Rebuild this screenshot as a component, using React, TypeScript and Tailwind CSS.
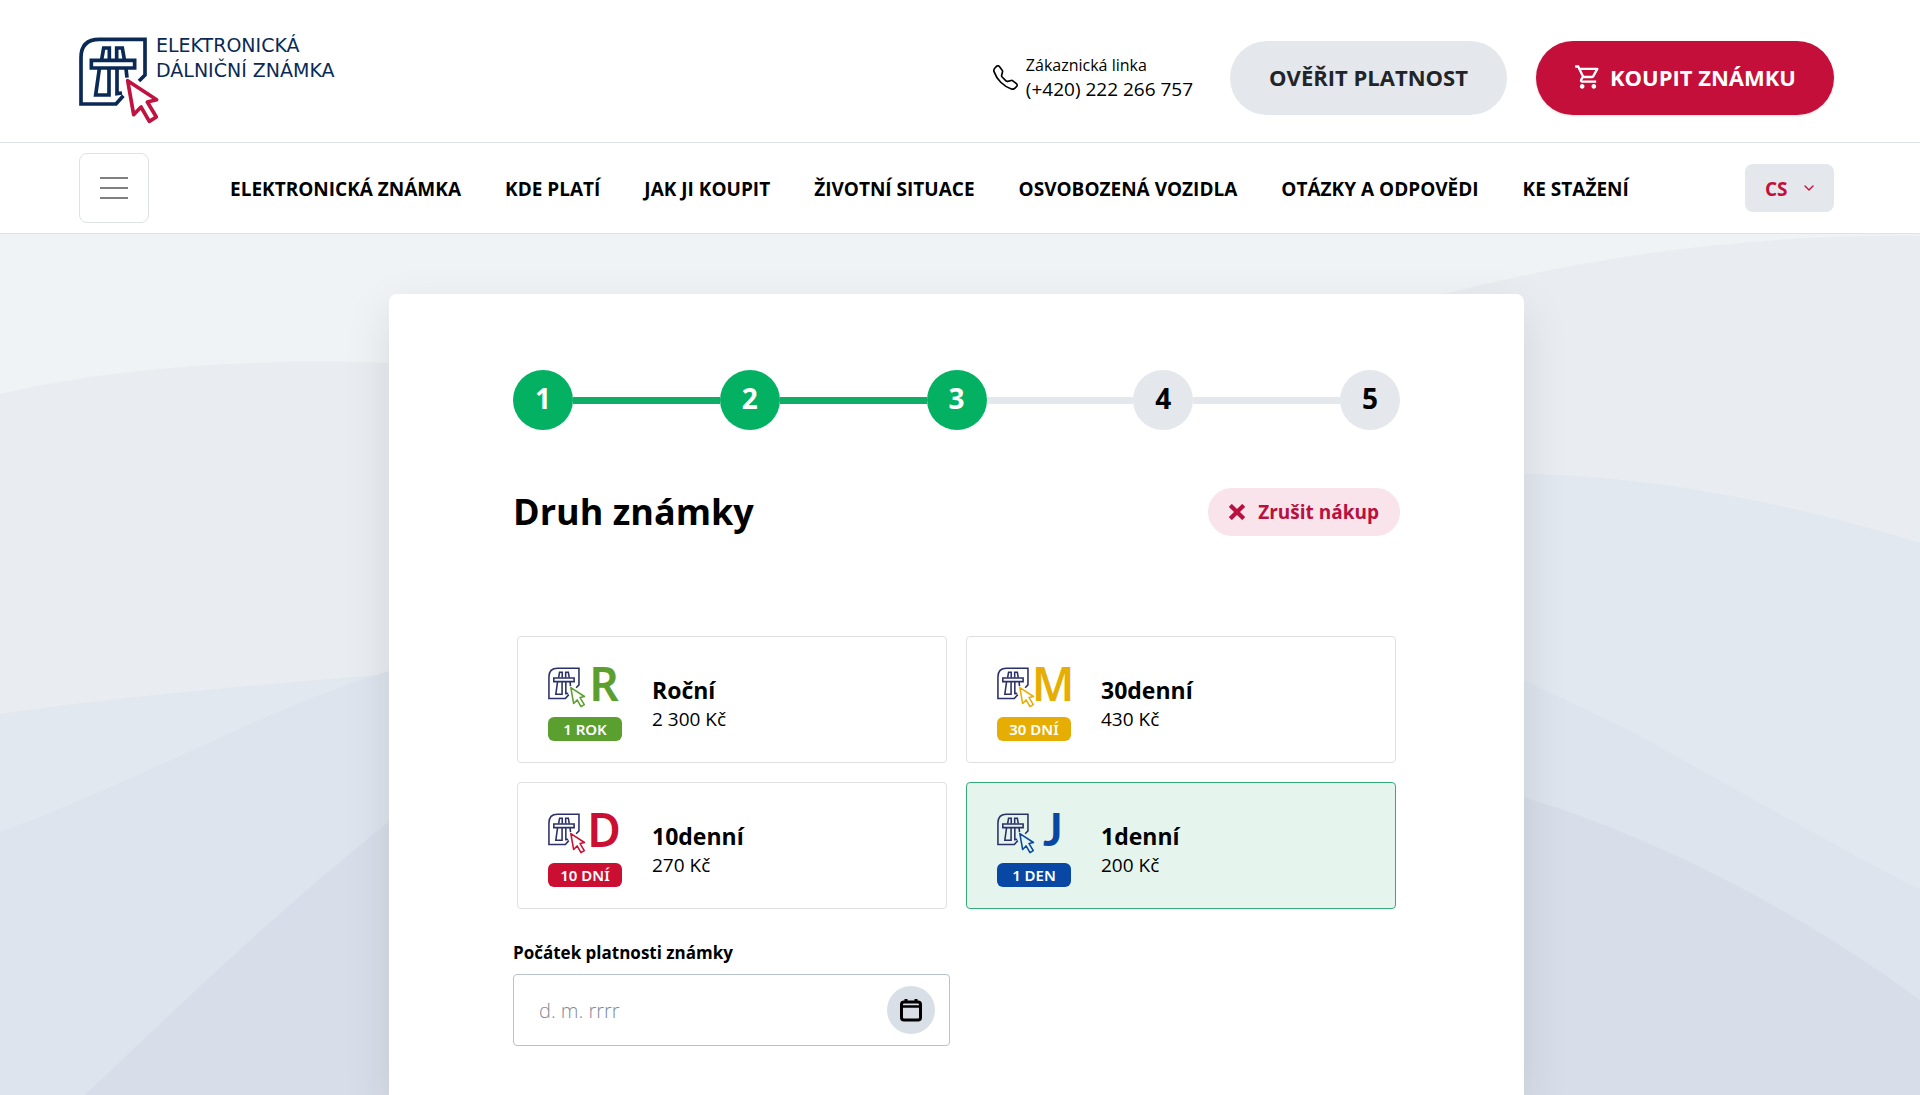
import React, { useState } from 'react';
import { BsTelephone } from 'react-icons/bs';
import { ImCross } from 'react-icons/im';
import { MdOutlineShoppingCart } from 'react-icons/md';
import { ChevronDown } from 'lucide-react';

interface Vignette {
  id: string;
  letter: string;
  letterFont: string;
  badge: string;
  name: string;
  price: string;
  color: string;
}

const NAV_ITEMS = [
  'ELEKTRONICKÁ ZNÁMKA',
  'KDE PLATÍ',
  'JAK JI KOUPIT',
  'ŽIVOTNÍ SITUACE',
  'OSVOBOZENÁ VOZIDLA',
  'OTÁZKY A ODPOVĚDI',
  'KE STAŽENÍ',
];

const NOTO = "font-['Noto_Sans',sans-serif] font-semibold";
// Lato keeps the J on the baseline
const LATO = "font-['Lato',sans-serif] font-bold";

const VIGNETTES: Vignette[] = [
  { id: 'R', letter: 'R', letterFont: NOTO, badge: '1 ROK', name: 'Roční', price: '2 300 Kč', color: '#5ba02f' },
  { id: 'M', letter: 'M', letterFont: NOTO, badge: '30 DNÍ', name: '30denní', price: '430 Kč', color: '#e6ae05' },
  { id: 'D', letter: 'D', letterFont: NOTO, badge: '10 DNÍ', name: '10denní', price: '270 Kč', color: '#cb0f32' },
  { id: 'J', letter: 'J', letterFont: LATO, badge: '1 DEN', name: '1denní', price: '200 Kč', color: '#0848a4' },
];

const STEPS = [1, 2, 3, 4, 5];
const CURRENT_STEP = 3;

interface LogoMarkProps {
  className?: string;
  color: string;
  cursorColor: string;
  strokeWidth: number;
}

/** Motorway sign with a mouse cursor over its corner */
const LogoMark: React.FC<LogoMarkProps> = ({ className, color, cursorColor, strokeWidth }) => (
  <svg viewBox="57 82 243 261" className={className} fill="none" aria-hidden="true">
    <g stroke={color} strokeWidth={strokeWidth}>
      <path d="M237 214 L255 196 V89 H118 Q63 89 63 144 V283 H168 L190 258" />
      <path d="M94 152 H224 V175 H94 Z" />
      <path d="M125 150 L131 115 H148 V150 M170 150 V115 H187 L193 150" />
      <path d="M118 177 L107 256 H147 V177 M171 177 V252 L186 250 M198 177 L201 204" />
    </g>
    <path
      d="M203 213 L290 270 L262 277 L289 322 L268 335 L243 292 L221 315 Z"
      stroke={cursorColor}
      strokeWidth={strokeWidth}
      strokeLinejoin="round"
    />
  </svg>
);

const Header: React.FC = () => (
  <header>
    <div className="flex h-[143px] items-center justify-between border-b border-[#dee2e6] pl-[79px] pr-[86px]">
      <a
        href="#"
        className="flex items-start pt-[14px] font-['DejaVu_Sans',sans-serif] text-[19px] leading-[25px] text-[#0a2a55]"
      >
        <LogoMark
          className="mt-1 h-[87px] w-[81px]"
          color="#0a2a55"
          cursorColor="#c01440"
          strokeWidth={11}
        />
        <span className="-ml-1">
          ELEKTRONICKÁ
          <br />
          DÁLNIČNÍ ZNÁMKA
        </span>
      </a>

      <div className="flex items-center pt-[14px]">
        <a href="#" className="mr-[37px] flex items-center gap-2 pb-0.5 text-black">
          <BsTelephone size={25} />
          <span className="flex flex-col leading-6">
            <span className="text-[16px]">Zákaznická linka</span>
            <span className="text-[19px]">(+420) 222 266 757</span>
          </span>
        </a>
        <button className="mr-[29px] h-[74px] rounded-full bg-[#e4e7eb] px-[39px] pb-0.5 text-[22px] font-bold text-[#212529]">
          OVĚŘIT PLATNOST
        </button>
        <button className="flex h-[74px] items-center gap-2 rounded-full bg-[#c40f3a] px-[38px] pb-0.5 text-[22px] font-bold text-white shadow-sm">
          <MdOutlineShoppingCart size={28} />
          KOUPIT ZNÁMKU
        </button>
      </div>
    </div>

    <div className="flex h-[91px] items-center border-b border-[#dee2e6] pl-[79px] pr-[86px]">
      <button
        aria-label="Menu"
        className="flex h-[70px] w-[70px] flex-col items-center justify-center gap-2 rounded-lg border border-[#dfe2e5]"
      >
        <span className="h-0.5 w-7 bg-[#808080]" />
        <span className="h-0.5 w-7 bg-[#808080]" />
        <span className="h-0.5 w-7 bg-[#808080]" />
      </button>
      <nav className="ml-[81px] flex flex-1 gap-11 pt-0.5 text-[19px] font-bold text-black">
        {NAV_ITEMS.map(item => (
          <a key={item} href="#" className="whitespace-nowrap">
            {item}
          </a>
        ))}
      </nav>
      <div className="grid items-center">
        <select
          aria-label="Jazyk"
          className="col-start-1 row-start-1 h-12 w-[89px] appearance-none rounded-lg bg-[#e4e7eb] pt-0.5 pl-5 text-[19px] font-bold text-[#c40f3a]"
        >
          <option>CS</option>
        </select>
        <ChevronDown
          size={16}
          className="pointer-events-none col-start-1 row-start-1 mr-[17px] justify-self-end text-[#c40f3a]"
        />
      </div>
    </div>
  </header>
);

/** Layered hills behind the form */
const Hills: React.FC = () => (
  <svg
    viewBox="0 234 1920 861"
    preserveAspectRatio="xMidYMin slice"
    className="h-full w-full"
    aria-hidden="true"
  >
    <path fill="#e9ecf0" d="M0 394 C120 365 280 358 389 363 C800 400 1200 355 1448 293 C1600 255 1750 234 1920 236 V1095 H0 Z" />
    <path fill="#e2e8ef" d="M0 714 C130 695 270 684 389 674 C800 640 1100 474 1524 474 C1660 476 1800 506 1920 543 V1095 H0 Z" />
    <path fill="#dde4ed" d="M0 832 C150 777 260 710 389 671 C800 560 1200 550 1524 680 L1633 732 L1747 796 C1810 830 1870 865 1920 889 V1095 H0 Z" />
    <path fill="#d8dee9" d="M85 1095 C190 995 290 900 389 822 C760 600 1200 680 1524 797 C1680 846 1810 920 1920 1000 V1095 Z" />
  </svg>
);

const Steps: React.FC = () => (
  <ol className="flex items-center text-[28px] font-bold">
    {STEPS.map(step => {
      const done = step <= CURRENT_STEP;
      return (
        <React.Fragment key={step}>
          {step > 1 && (
            <li aria-hidden="true" className={`h-[7px] flex-1 ${done ? 'bg-[#0fae66]' : 'bg-[#e4e7eb]'}`} />
          )}
          <li
            className={`flex h-[60px] w-[60px] items-center justify-center rounded-full pb-1 ${
              done ? 'bg-[#04b163] text-white' : 'bg-[#e4e7eb] text-black'
            }`}
          >
            {step}
          </li>
        </React.Fragment>
      );
    })}
  </ol>
);

interface VignetteOptionProps {
  vignette: Vignette;
  checked: boolean;
  onSelect: (id: string) => void;
}

const VignetteOption: React.FC<VignetteOptionProps> = ({ vignette, checked, onSelect }) => (
  <label
    className={`relative flex h-[127px] cursor-pointer items-center gap-[30px] rounded border pt-2 pl-[30px] ${
      checked ? 'border-[#35ab78] bg-[#e5f5ed]' : 'border-[#dee0e3] bg-white'
    }`}
  >
    <input
      type="radio"
      name="vignette"
      className="sr-only"
      checked={checked}
      onChange={() => onSelect(vignette.id)}
    />
    <span className="flex w-[74px] flex-col gap-[9px]">
      <span className="flex items-start">
        <LogoMark
          className="h-[41px] w-[38px] shrink-0"
          color="#2b3168"
          cursorColor={vignette.color}
          strokeWidth={10}
        />
        <span
          className={`flex w-9 justify-center text-[46px] leading-8 ${vignette.letterFont}`}
          style={{ color: vignette.color }}
        >
          {vignette.letter}
        </span>
      </span>
      <span
        className="rounded-md text-center font-['Noto_Sans',sans-serif] text-[15px] leading-6 font-semibold text-white"
        style={{ backgroundColor: vignette.color }}
      >
        {vignette.badge}
      </span>
    </span>
    <span className="flex flex-col text-black">
      <span className="text-[23px] leading-[30px] font-bold">{vignette.name}</span>
      <span className="text-[19px] leading-7">{vignette.price}</span>
    </span>
  </label>
);

const App: React.FC = () => {
  const [selected, setSelected] = useState('J');

  return (
    <div className="flex min-h-screen flex-col bg-white font-['Open_Sans',sans-serif]">
      <Header />
      <main className="grid flex-1 grid-cols-1 overflow-hidden bg-[#eff3f6]">
        {/* zero base height, so the drawing never stretches the row */}
        <div className="col-start-1 row-start-1 grid h-0 min-h-full">
          <Hills />
        </div>

        <div className="z-10 col-start-1 row-start-1 flex justify-center pt-[60px] pr-[7px]">
          <section className="w-full max-w-[1135px] rounded-t-lg bg-white px-[124px] pt-[76px] shadow-[0_16px_48px_rgba(0,0,0,0.1)]">
            <Steps />

            <div className="mt-[58px] flex items-center justify-between">
              <h1 id="kind-title" className="text-[36px] leading-[48px] font-bold text-black">
                Druh známky
              </h1>
              <button className="flex h-12 items-center gap-[13px] rounded-full bg-[#f8e4ea] px-[21px] text-[19px] font-bold text-[#b8103f]">
                <ImCross size={16} />
                Zrušit nákup
              </button>
            </div>

            <div
              role="radiogroup"
              aria-labelledby="kind-title"
              className="mt-[100px] grid grid-cols-2 gap-x-[19px] gap-y-[19px] px-1"
            >
              {VIGNETTES.map(v => (
                <VignetteOption
                  key={v.id}
                  vignette={v}
                  checked={selected === v.id}
                  onSelect={setSelected}
                />
              ))}
            </div>

            <label htmlFor="valid-from" className="mt-8 block text-[17px] leading-6 font-bold text-black">
              Počátek platnosti známky
            </label>
            <div className="mt-[9px] flex h-[72px] w-[437px] items-center rounded border border-[#b9c3cb] pr-[14px] pl-[25px]">
              <input
                id="valid-from"
                type="text"
                placeholder="d. m. rrrr"
                className="min-w-0 flex-1 pt-0.5 text-[20px] font-light outline-none placeholder:text-[#7f8a99]"
              />
              <button
                aria-label="Otevřít kalendář"
                className="flex h-12 w-12 items-center justify-center rounded-full bg-[#d9dfe6]"
              >
                <svg viewBox="0 0 24 24" className="h-6 w-6" fill="none" stroke="#000" strokeWidth="3" aria-hidden="true">
                  <rect x="2.5" y="4" width="19" height="18" rx="2.5" />
                  <path d="M2.5 8.5 H21.5" strokeWidth="2.5" />
                  <path d="M7 1 V5 M17 1 V5" />
                </svg>
              </button>
            </div>
          </section>
        </div>
      </main>
    </div>
  );
};

export default App;
